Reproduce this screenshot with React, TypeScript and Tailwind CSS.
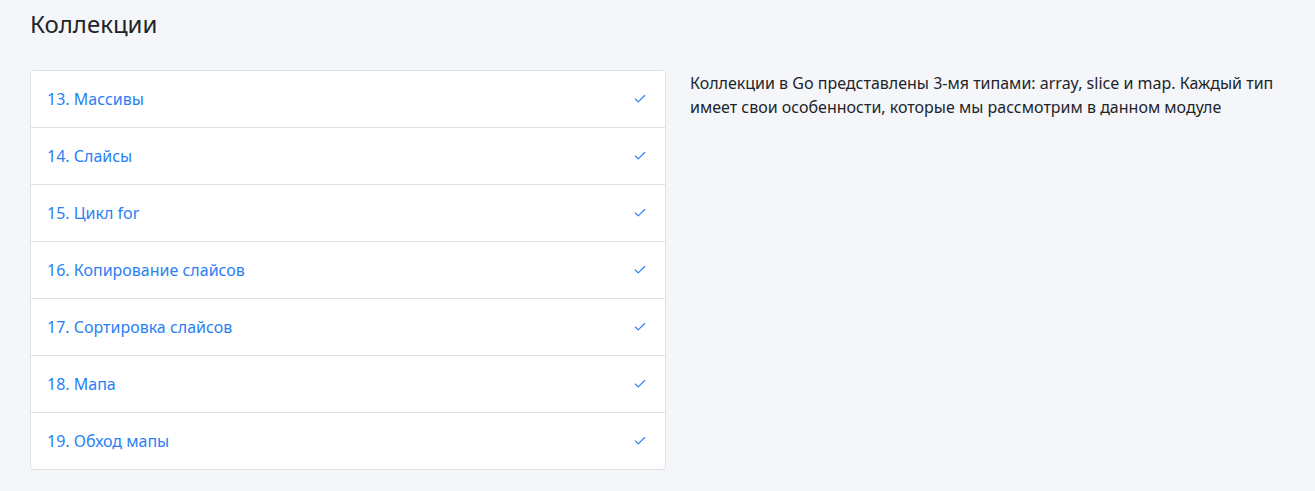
import { Check } from 'lucide-react';

const lessons = [
  '13. Массивы',
  '14. Слайсы',
  '15. Цикл for',
  '16. Копирование слайсов',
  '17. Сортировка слайсов',
  '18. Мапа',
  '19. Обход мапы',
];

export default function App() {
  return (
    <div className="min-h-[491px] bg-[#f5f6fa] px-[30px] pt-[7px] font-['Noto_Sans',sans-serif] text-[#212529]">
      <h1 className="text-[24px] leading-[34px] font-normal">Коллекции</h1>

      <div className="mt-[29px] flex gap-[24px]">
        <ul className="w-[636px] shrink-0 rounded-[4px] border border-[#dee2e6] bg-white">
          {lessons.map((title, i) => (
            <li
              key={title}
              className={`box-content flex h-[56px] items-center justify-between pl-[16px] pr-[18px] ${i > 0 ? 'border-t border-[#dee2e6]' : ''}`}
            >
              <a href="#" className="text-[16px] text-[#2a7ff5]">
                {title}
              </a>
              <Check size={14} strokeWidth={2} className="text-[#2a7ff5]" />
            </li>
          ))}
        </ul>

        <p className="pt-[1px] text-[16px] leading-[24px]">
          Коллекции в Go представлены 3-мя типами: array, slice и map. Каждый тип имеет свои особенности, которые мы рассмотрим в данном модуле
        </p>
      </div>
    </div>
  );
}
